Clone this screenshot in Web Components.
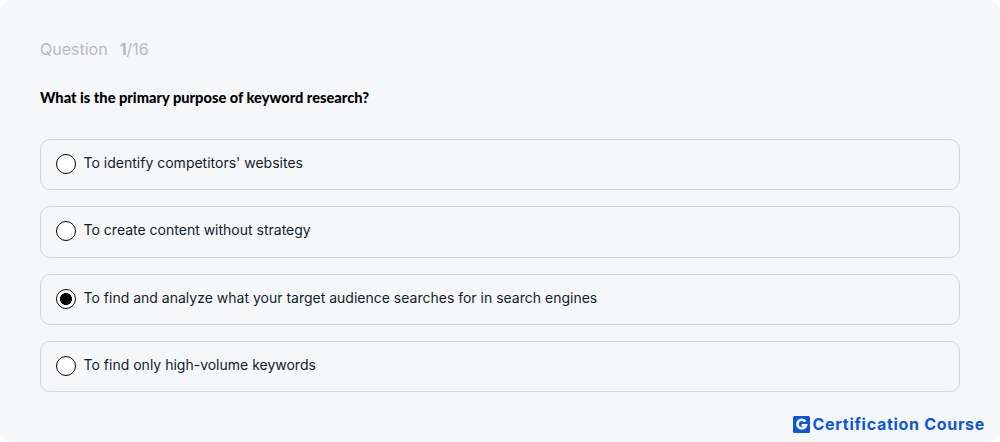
<!DOCTYPE html>
<html>
<head>
<meta charset="utf-8">
<style>
  html, body { margin: 0; background: #fff; }
</style>
</head>
<body>
<quiz-card>
  <quiz-option>To identify competitors' websites</quiz-option>
  <quiz-option>To create content without strategy</quiz-option>
  <quiz-option selected>To find and analyze what your target audience searches for in search engines</quiz-option>
  <quiz-option>To find only high-volume keywords</quiz-option>
</quiz-card>

<template id="card-tpl">
  <style>
    :host {
      display: block;
      box-sizing: border-box;
      width: 1000px;
      height: 442px;
      padding: 39px 40px 0;
      background: #f6f7f9;
      border-radius: 12px;
      font-family: Inter, "Liberation Sans", sans-serif;
      overflow: hidden;
    }
    .count {
      display: flex;
      gap: 12px;
      height: 20px;
      line-height: 20px;
      font-size: 16px;
      color: #b9bbc1;
    }
    .count b { font-weight: 700; }
    h1 {
      margin: 29px 0 0;
      height: 20px;
      line-height: 20px;
      font-family: Lato, Inter, sans-serif;
      font-size: 14.65px;
      font-weight: 900;
      color: #000;
    }
    .list {
      display: flex;
      flex-direction: column;
      gap: 16px;
      margin-top: 31px;
    }
    footer {
      display: flex;
      justify-content: flex-end;
      align-items: center;
      gap: 3px;
      margin: 22px -25px 0 0;
      height: 20px;
      font-size: 16px;
      font-weight: 700;
      letter-spacing: 0.7px;
      color: #0b57d8;
    }
    svg { display: block; }
  </style>
  <div class="count"><span>Question</span><span><b>1</b>/16</span></div>
  <h1>What is the primary purpose of keyword research?</h1>
  <div class="list"><slot></slot></div>
  <footer>
    <svg width="17" height="17" viewBox="0 0 17 17">
      <rect width="17" height="17" rx="1.5" fill="#0b57d8"/>
      <path d="M12.4 5.6A4.4 4.4 0 1 0 13 9.3H8.6" fill="none" stroke="#fff" stroke-width="2.6"/>
    </svg>
    <span>Certification Course</span>
  </footer>
</template>

<template id="option-tpl">
  <style>
    :host {
      display: flex;
      align-items: center;
      gap: 7.6px;
      box-sizing: border-box;
      height: 51.33px;
      padding: 0 15px 1px;
      border: 1px solid #d3d5da;
      border-radius: 10px;
      font-size: 14px;
      color: #131c2b;
    }
    .radio {
      flex: none;
      box-sizing: border-box;
      width: 20px;
      height: 20px;
      border: 1.5px solid #000;
      border-radius: 50%;
      background: #fff;
    }
    .label { padding-bottom: 3px; }
    :host([selected]) .radio {
      background: radial-gradient(circle, #000 0, #000 5.7px, #fff 6.2px);
    }
  </style>
  <span class="radio"></span>
  <span class="label"><slot></slot></span>
</template>

<script>
class QuizCard extends HTMLElement {
  constructor() {
    super();
    this.attachShadow({mode: 'open'});
    this.shadowRoot.appendChild(document.getElementById('card-tpl').content.cloneNode(true));
  }
}

class QuizOption extends HTMLElement {
  constructor() {
    super();
    this.attachShadow({mode: 'open'});
    this.shadowRoot.appendChild(document.getElementById('option-tpl').content.cloneNode(true));
  }
}

customElements.define('quiz-card', QuizCard);
customElements.define('quiz-option', QuizOption);
</script>
</body>
</html>
